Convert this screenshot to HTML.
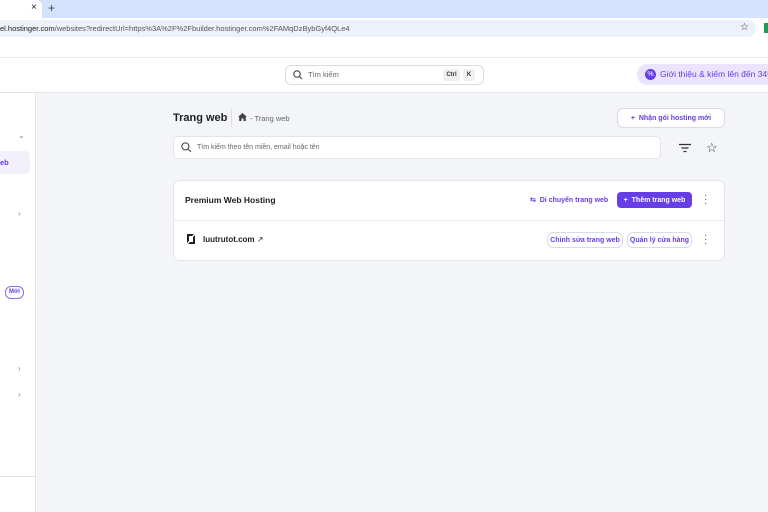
<!DOCTYPE html>
<html><head><meta charset="utf-8"><style>
*{box-sizing:border-box;margin:0;padding:0}
body{width:768px;height:512px;overflow:hidden;background:#f4f5f9;font-family:"Liberation Sans",sans-serif;position:relative;color:#1d1e20}
.abs{position:absolute;white-space:nowrap}
.btn{position:absolute;border:1px solid #dadce0;border-radius:6px;background:#fff;color:#673de6;font-weight:bold;font-size:7px;display:flex;align-items:center;justify-content:center;white-space:nowrap}
</style></head><body>
<div class="abs" style="left:0;top:0;width:768px;height:18px;background:#d3e3fd"></div>
<div class="abs" style="left:0;top:0;width:42px;height:18px;background:#fff;border-radius:0 6px 0 0"></div>
<div class="abs" style="left:31px;top:2px;font-size:10px">×</div>
<div class="abs" style="left:48px;top:1px;font-size:12px;color:#444">+</div>
<div class="abs" style="left:0;top:18px;width:768px;height:39px;background:#fff"></div>
<div class="abs" style="left:0;top:20px;width:756px;height:17px;background:#edf1f9;border-radius:0 9px 9px 0"></div>
<div class="abs" style="left:0;top:24px;font-size:7.5px;color:#222">el.hostinger.com<span style="color:#555">/websites?redirectUrl=https%3A%2F%2Fbuilder.hostinger.com%2FAMqDzBybGyf4QLe4</span></div>
<div class="abs" style="left:740px;top:22px;font-size:10px;color:#333">☆</div>
<div class="abs" style="left:764px;top:23px;width:4px;height:10px;background:#1a9e5a"></div>
<div class="abs" style="left:0;top:57px;width:768px;height:36px;background:#fff;border-top:1px solid #eee;border-bottom:1px solid #e3e4e8"></div>
<div class="abs" style="left:285px;top:65px;width:199px;height:20px;border:1px solid #dadce0;border-radius:6px;background:#fff"></div>
<svg class="abs" style="left:293px;top:70px" width="10" height="10" viewBox="0 0 10 10"><circle cx="4" cy="4" r="3.2" fill="none" stroke="#444" stroke-width="1.1"/><path d="M6.5 6.5L9 9" stroke="#444" stroke-width="1.1"/></svg>
<div class="abs" style="left:308px;top:70px;font-size:7.5px;color:#666">Tìm kiếm</div>
<div class="abs" style="left:443px;top:69px;width:17px;height:12px;background:#f0f0f3;border-radius:3px;font-size:6px;font-weight:bold;text-align:center;line-height:12px;color:#333">Ctrl</div>
<div class="abs" style="left:463px;top:69px;width:12px;height:12px;background:#f0f0f3;border-radius:3px;font-size:6px;font-weight:bold;text-align:center;line-height:12px;color:#333">K</div>
<div class="abs" style="left:637px;top:64px;width:140px;height:21px;background:#ebe4ff;border-radius:11px"></div>
<div class="abs" style="left:645px;top:69px;width:11px;height:11px;border-radius:50%;background:#673de6;color:#fff;font-size:7px;text-align:center;line-height:11px">%</div>
<div class="abs" style="left:660px;top:69px;font-size:8.5px;color:#673de6">Giới thiệu &amp; kiếm lên đến 345</div>
<div class="abs" style="left:0;top:93px;width:36px;height:419px;background:#fff;border-right:1px solid #e3e4e8"></div>
<div class="abs" style="left:0;top:476px;width:36px;height:1px;background:#e3e4e8"></div>
<div class="abs" style="left:18px;top:131px;font-size:8px;color:#888">⌄</div>
<div class="abs" style="left:0;top:151px;width:30px;height:23px;background:#f1f0fb;border-radius:0 5px 5px 0"></div>
<div class="abs" style="left:0;top:158px;font-size:7.5px;font-weight:bold;color:#673de6">eb</div>
<div class="abs" style="left:18px;top:209px;font-size:8px;color:#888">›</div>
<div class="abs" style="left:5px;top:286px;width:19px;height:13px;border:1px solid #8c6cf0;border-radius:6px;font-size:6px;font-weight:bold;color:#673de6;text-align:center;line-height:11px">Mới</div>
<div class="abs" style="left:18px;top:364px;font-size:8px;color:#888">›</div>
<div class="abs" style="left:18px;top:390px;font-size:8px;color:#888">›</div>
<div class="abs" style="left:173px;top:112px;font-size:11px;font-weight:bold">Trang web</div>
<div class="abs" style="left:231px;top:109px;width:1px;height:18px;background:#ddd"></div>
<svg class="abs" style="left:238px;top:113px" width="9" height="8" viewBox="0 0 9 8"><path d="M4.5 0L0 4h1.2v4h2.3V5.5h2V8h2.3V4H9z" fill="#444"/></svg>
<div class="abs" style="left:250px;top:114px;font-size:7.5px;color:#666">- Trang web</div>
<div class="btn" style="left:617px;top:108px;width:108px;height:20px">+&nbsp; Nhận gói hosting mới</div>
<div class="abs" style="left:173px;top:136px;width:488px;height:23px;background:#fff;border:1px solid #e3e4e8;border-radius:5px"></div>
<svg class="abs" style="left:181px;top:142px" width="11" height="11" viewBox="0 0 10 10"><circle cx="4" cy="4" r="3.2" fill="none" stroke="#444" stroke-width="1"/><path d="M6.5 6.5L9 9" stroke="#444" stroke-width="1"/></svg>
<div class="abs" style="left:197px;top:144px;font-size:7px;color:#666">Tìm kiếm theo tên miền, email hoặc tên</div>
<svg class="abs" style="left:679px;top:143px" width="12" height="10"><path d="M0 1.5H12M2.5 5H9.5M4.5 8.5H7.5" stroke="#333" stroke-width="1.2"/></svg>
<div class="abs" style="left:706px;top:140px;font-size:13px;color:#333">☆</div>
<div class="abs" style="left:173px;top:180px;width:552px;height:81px;background:#fff;border:1px solid #e3e4e8;border-radius:7px"></div>
<div class="abs" style="left:173px;top:220px;width:552px;height:1px;background:#e8e9ed"></div>
<div class="abs" style="left:185px;top:195px;font-size:8.5px;font-weight:bold">Premium Web Hosting</div>
<div class="abs" style="left:530px;top:196px;font-size:7px;font-weight:bold;color:#673de6">⇆&nbsp; Di chuyển trang web</div>
<div class="btn" style="left:617px;top:192px;width:75px;height:16px;background:#673de6;border:none;border-radius:4px;color:#fff">+&nbsp; Thêm trang web</div>
<div class="abs" style="left:704px;top:194px;font-size:10px;color:#555;line-height:4px">·<br>·<br>·</div>
<svg class="abs" style="left:185px;top:233px" width="12" height="12" viewBox="0 0 12 12"><path d="M2 1h7l-2 2H4v5L2 10zM10 11H3l2-2h3V4l2-2z" fill="#1d1e20"/></svg>
<div class="abs" style="left:203px;top:235px;font-size:8px;font-weight:bold">luutrutot.com <span style="font-weight:normal">↗</span></div>
<div class="btn" style="left:547px;top:232px;width:76px;height:16px">Chỉnh sửa trang web</div>
<div class="btn" style="left:627px;top:232px;width:65px;height:16px">Quản lý cửa hàng</div>
<div class="abs" style="left:704px;top:234px;font-size:10px;color:#555;line-height:4px">·<br>·<br>·</div>
</body></html>
